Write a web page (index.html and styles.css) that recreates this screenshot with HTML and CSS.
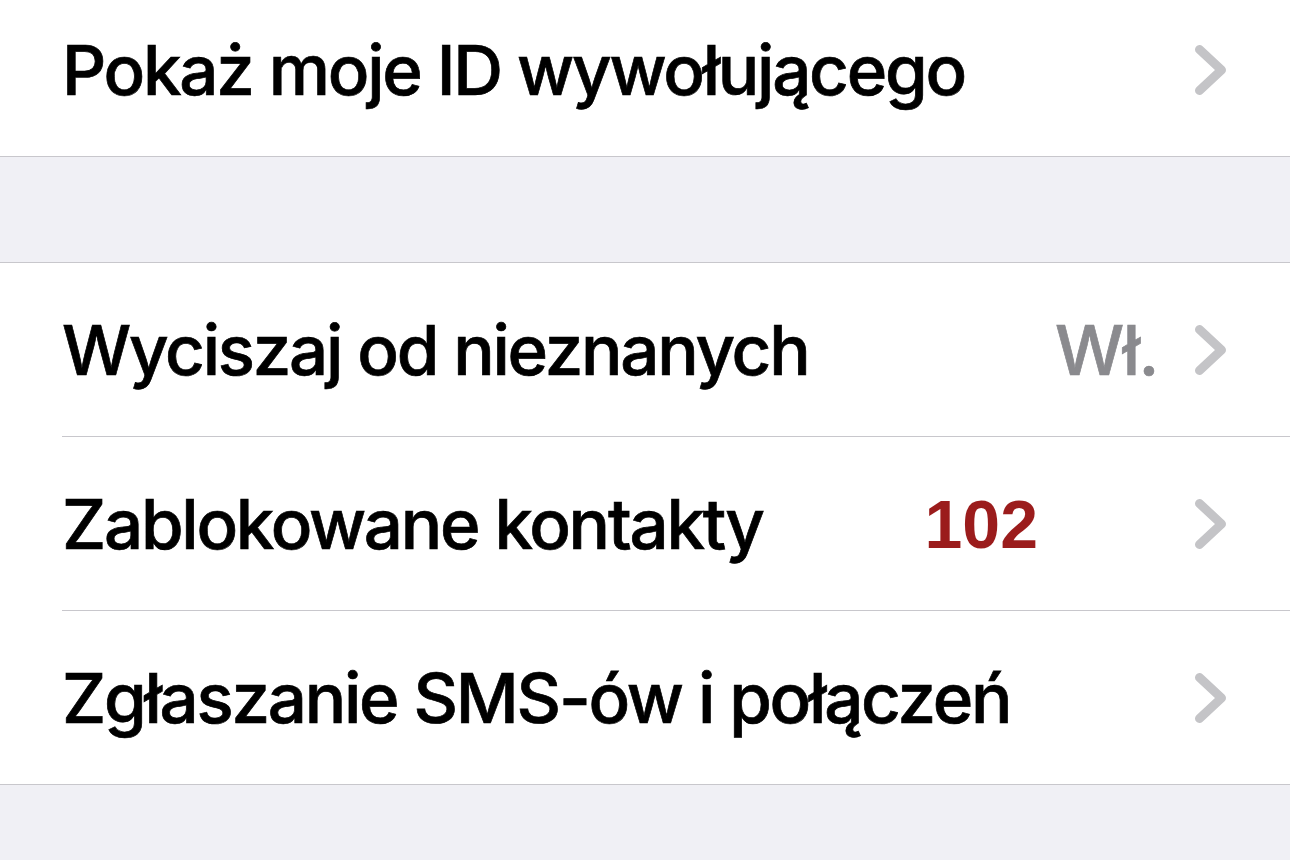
FILE: index.html
```html
<!DOCTYPE html>
<html lang="pl">
<head>
<meta charset="utf-8">
<link rel="stylesheet" href="styles.css">
</head>
<body>
<div class="group group-first">
  <div class="row">
    <div class="cell">
      <span class="label">Pokaż moje ID wywołującego</span>
      <svg class="chev" viewBox="0 0 34 52"><path d="M5.5 5.5 L27.5 26 L5.5 46.5" /></svg>
    </div>
  </div>
</div>
<div class="gap"></div>
<div class="group">
  <div class="row">
    <div class="cell">
      <span class="label">Wyciszaj od nieznanych</span>
      <span class="value">Wł.</span>
      <svg class="chev" viewBox="0 0 34 52"><path d="M5.5 5.5 L27.5 26 L5.5 46.5" /></svg>
    </div>
  </div>
  <div class="row">
    <div class="cell">
      <span class="label">Zablokowane kontakty</span>
      <span class="count">102</span>
      <svg class="chev" viewBox="0 0 34 52"><path d="M5.5 5.5 L27.5 26 L5.5 46.5" /></svg>
    </div>
  </div>
  <div class="row">
    <div class="cell">
      <span class="label">Zgłaszanie SMS-ów i połączeń</span>
      <svg class="chev" viewBox="0 0 34 52"><path d="M5.5 5.5 L27.5 26 L5.5 46.5" /></svg>
    </div>
  </div>
</div>
</body>
</html>
```
FILE: styles.css
```css
html, body {
  margin: 0;
  padding: 0;
}
body {
  background: #f0f0f5;
  font-family: Inter, "Noto Sans", sans-serif;
  width: 1290px;
  height: 860px;
  overflow: hidden;
}
.group {
  background: #ffffff;
  border-top: 1px solid #c8c7cc;
  border-bottom: 1px solid #c8c7cc;
}
.group-first {
  margin-top: -17px;
  border-top: none;
}
.gap {
  height: 105px;
}
.row {
  padding-left: 62px;
}
.cell {
  height: 173px;
  display: flex;
  align-items: center;
  padding-right: 62px;
  border-bottom: 1px solid #c8c7cc;
}
.row:last-child .cell {
  border-bottom: none;
}
.label {
  font-size: 69px;
  font-weight: 500;
  color: #000;
  flex: 1;
  letter-spacing: -2.25px;
  -webkit-text-stroke: 0.7px #000;
}
.value {
  font-size: 69px;
  font-weight: 500;
  color: #8a8a8e;
  letter-spacing: -1.5px;
  -webkit-text-stroke: 0.7px #8a8a8e;
  margin-right: 36px;
}
.count {
  font-family: "Liberation Sans", Arial, sans-serif;
  font-weight: 700;
  font-size: 68px;
  color: #9b1c1c;
  margin-right: 156px;
}
.chev {
  width: 34px;
  height: 52px;
  flex: none;
}
.chev path {
  fill: none;
  stroke: #c4c4c7;
  stroke-width: 9;
  stroke-linecap: round;
  stroke-linejoin: round;
}
```
